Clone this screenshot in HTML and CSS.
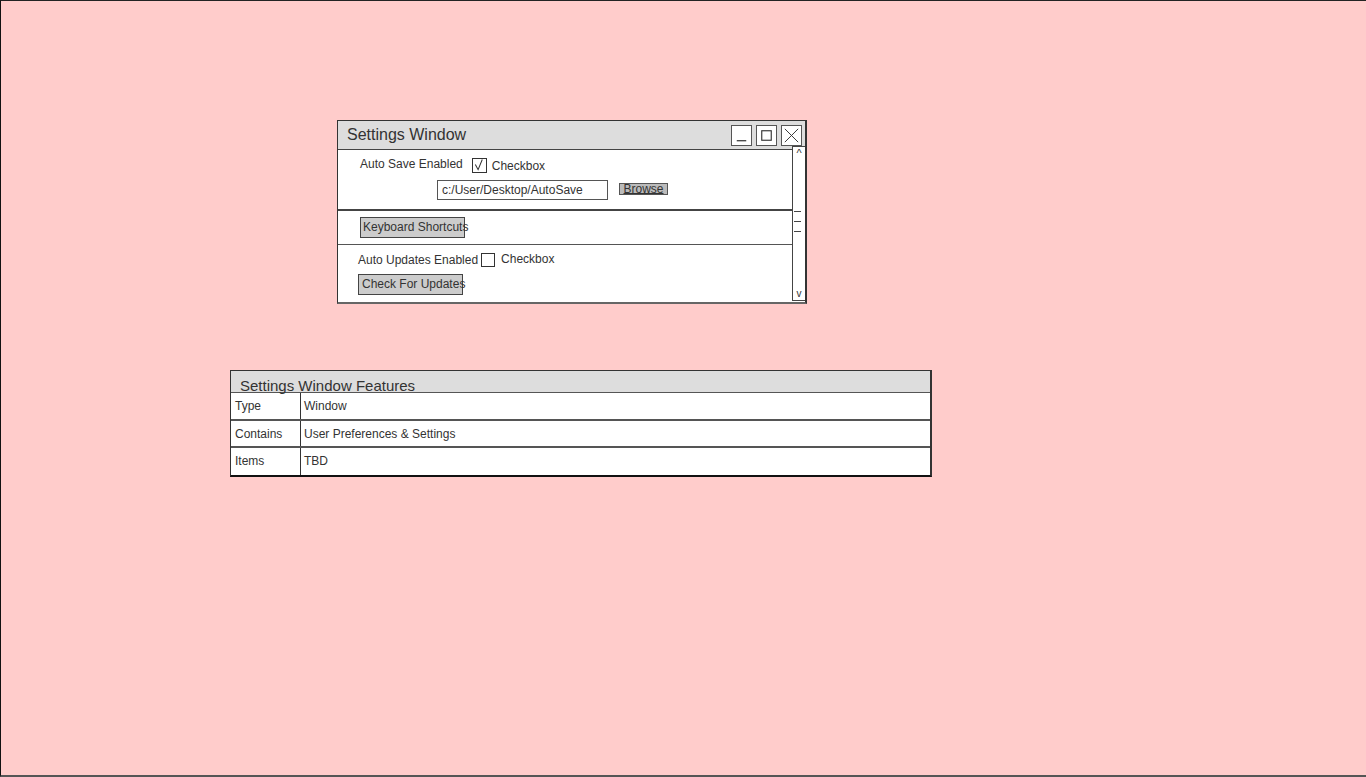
FILE: index.html
```html
<!DOCTYPE html>
<html>
<head>
<meta charset="utf-8">
<link rel="stylesheet" href="styles.css">
</head>
<body>
<div class="canvas">
  <div class="window settings">
    <div class="titlebar">
      <span class="title">Settings Window</span>
      <div class="winbtns">
        <span class="wbtn"><svg width="20" height="20" viewBox="0 0 20 20"><path d="M5 15.5h10" stroke="#333" stroke-width="1.3"/></svg></span>
        <span class="wbtn"><svg width="20" height="20" viewBox="0 0 20 20"><rect x="5" y="5" width="10" height="10" fill="none" stroke="#333" stroke-width="1.2"/></svg></span>
        <span class="wbtn"><svg width="20" height="20" viewBox="0 0 20 20"><path d="M3 3L17 17M17 3L3 17" stroke="#333" stroke-width="1"/></svg></span>
      </div>
    </div>
    <div class="content">
      <div class="section s1">
        <div class="row r1">
          <span class="label">Auto Save Enabled</span>
          <span class="check"><svg width="14" height="14" viewBox="0 0 14 14"><path d="M2.5 6L5.5 11.5L10 0.5" fill="none" stroke="#333" stroke-width="1.1"/></svg></span>
          <span class="cblabel">Checkbox</span>
        </div>
        <div class="row r2">
          <span class="input">c:/User/Desktop/AutoSave</span>
          <span class="browse">Browse</span>
        </div>
      </div>
      <div class="section s2">
        <span class="button">Keyboard Shortcuts</span>
      </div>
      <div class="section s3">
        <div class="row r3">
          <span class="label">Auto Updates Enabled</span>
          <span class="check empty"></span>
          <span class="cblabel">Checkbox</span>
        </div>
        <span class="button b2">Check For Updates</span>
      </div>
    </div>
    <div class="scrollbar">
      <span class="arrow up">^</span>
      <div class="thumb"><i></i><i></i><i></i></div>
      <span class="arrow down">v</span>
    </div>
  </div>

  <div class="window features">
    <div class="fhead">Settings Window Features</div>
    <div class="frow"><div class="fkey">Type</div><div class="fval">Window</div></div>
    <div class="frow"><div class="fkey">Contains</div><div class="fval">User Preferences &amp; Settings</div></div>
    <div class="frow last"><div class="fkey">Items</div><div class="fval">TBD</div></div>
  </div>
</div>
</body>
</html>
```

FILE: styles.css
```css
html, body {
  margin: 0;
  padding: 0;
}
body {
  background: #ffcccb;
  font-family: "Liberation Sans", Arial, sans-serif;
  color: #333;
}
.canvas {
  position: relative;
  width: 1366px;
  height: 777px;
  box-sizing: border-box;
  border-left: 1px solid #111;
  border-top: 1px solid #222;
  border-bottom: 2px solid #555;
  background: #ffcccb;
}
.window {
  position: absolute;
  box-sizing: border-box;
  background: #fff;
}
.settings {
  left: 336px;
  top: 119px;
  width: 470px;
  height: 184px;
  border: 1px solid #333;
  border-right-width: 2px;
  border-bottom-width: 2px;
  border-bottom-color: #666;
  display: flex;
  flex-direction: column;
}
.titlebar {
  height: 28px;
  background: #ddd;
  border-bottom: 1px solid #444;
  display: flex;
  align-items: center;
  justify-content: space-between;
  padding-left: 9px;
  padding-right: 3px;
}
.title {
  font-size: 16px;
  color: #333;
}
.winbtns {
  display: flex;
  gap: 4px;
  margin-top: 0px;
}
.wbtn {
  width: 21px;
  height: 21px;
  box-sizing: border-box;
  border: 1px solid #555;
  background: #fff;
  display: flex;
}
.wbtn svg {
  width: 19px;
  height: 19px;
}
.content {
  flex: 1;
  display: flex;
  flex-direction: column;
  margin-right: 13px;
}
.section {
  font-size: 12px;
}
.s1 {
  height: 61px;
  border-bottom: 2px solid #444;
  box-sizing: border-box;
  padding-top: 7px;
}
.row {
  display: flex;
  align-items: center;
}
.r1 {
  padding-left: 22px;
}
.r1 .label {
  margin-top: -3px;
}
.check {
  width: 15px;
  height: 15px;
  box-sizing: border-box;
  border: 1px solid #333;
  display: inline-flex;
  background: #fff;
}
.r1 .check {
  margin-left: 9px;
}
.check svg {
  width: 13px;
  height: 13px;
}
.cblabel {
  margin-left: 5px;
}
.r1 .cblabel {
  margin-top: 2px;
}
.r2 {
  padding-left: 99px;
  margin-top: 7px;
}
.input {
  width: 171px;
  height: 20px;
  box-sizing: border-box;
  border: 1px solid #555;
  padding-left: 4px;
  line-height: 18px;
  font-size: 12px;
}
.browse {
  margin-left: 11px;
  width: 49px;
  height: 12px;
  box-sizing: border-box;
  border: 1px solid #555;
  background: #bbb;
  font-size: 12px;
  line-height: 10px;
  text-align: center;
  text-decoration: underline;
  text-decoration-thickness: 1px;
  text-underline-offset: 0px;
  margin-top: -2px;
}
.s2 {
  height: 34px;
  border-bottom: 1px solid #555;
  box-sizing: border-box;
  padding-top: 6px;
  padding-left: 22px;
}
.button {
  display: inline-block;
  width: 105px;
  height: 21px;
  box-sizing: border-box;
  border: 1px solid #444;
  background: #ccc;
  font-size: 12px;
  line-height: 19px;
  padding-left: 2px;
  white-space: nowrap;
  overflow: visible;
}
.s3 {
  padding-top: 7px;
  padding-left: 20px;
}
.r3 .label {
  margin-top: 1px;
}
.r3 .check {
  margin-left: 3px;
  width: 14px;
  height: 14px;
}
.r3 .cblabel {
  margin-left: 6px;
  margin-top: -1px;
}
.b2 {
  margin-top: 7px;
  padding-left: 3px;
}
.scrollbar {
  position: absolute;
  right: 0px;
  top: 25px;
  width: 13px;
  height: 155px;
  box-sizing: border-box;
  border: 1px solid #444;
  border-right-width: 0;
  background: #fff;
  display: flex;
  flex-direction: column;
  align-items: center;
}
.arrow {
  font-size: 11px;
  line-height: 11px;
  color: #333;
}
.arrow.up {
  margin-top: 1px;
}
.thumb {
  margin-top: 52px;
  display: flex;
  flex-direction: column;
  gap: 9px;
  width: 100%;
}
.thumb i {
  display: block;
  height: 1px;
  width: 7px;
  margin-left: 1px;
  background: #444;
}
.arrow.down {
  margin-top: auto;
  margin-bottom: 1px;
  font-size: 10px;
}
.features {
  left: 229px;
  top: 369px;
  width: 702px;
  height: 107px;
  border: 1px solid #333;
  border-right-width: 2px;
  border-bottom-width: 2px;
  border-bottom-color: #111;
  display: flex;
  flex-direction: column;
}
.fhead {
  height: 22px;
  background: #ddd;
  border-bottom: 1px solid #555;
  font-size: 15px;
  line-height: 15px;
  padding-left: 9px;
  padding-top: 7px;
  box-sizing: border-box;
  color: #333;
}
.frow {
  display: flex;
  height: 28px;
  border-bottom: 2px solid #555;
  box-sizing: border-box;
  font-size: 12px;
}
.frow:nth-child(3) {
  height: 27px;
}
.frow.last {
  border-bottom: 0;
  flex: 1;
}
.fkey {
  width: 70px;
  border-right: 1px solid #333;
  padding-left: 4px;
  padding-top: 6px;
  box-sizing: border-box;
}
.fval {
  padding-left: 3px;
  padding-top: 6px;
}
```
